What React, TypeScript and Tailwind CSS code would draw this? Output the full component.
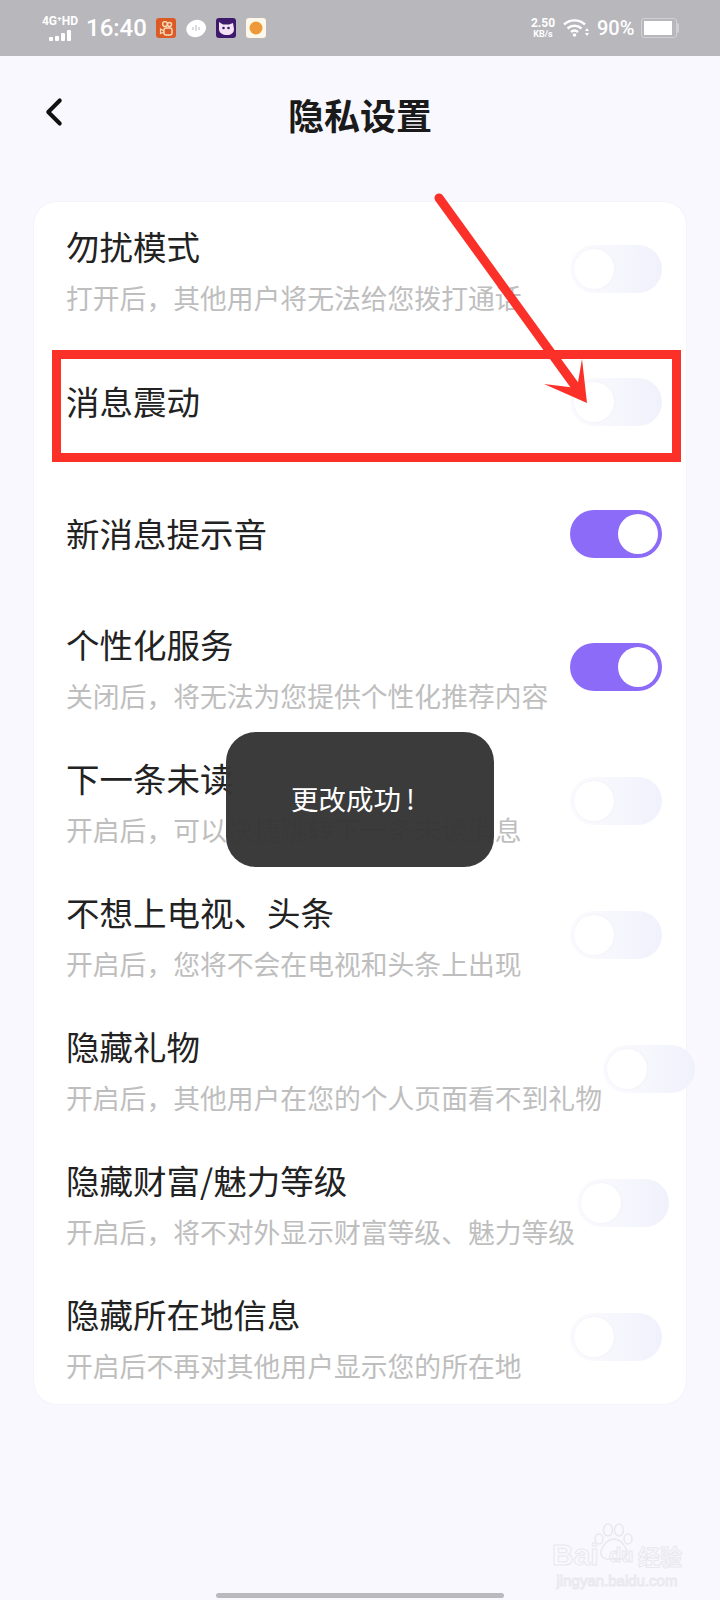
import React from 'react';
import { ChevronLeft } from 'lucide-react';

interface SettingRow {
    title: string;
    hint?: string;
    on?: boolean;
    // some switches sit off the regular right edge
    switchClass?: string;
}

const rows: SettingRow[] = [
    { title: '勿扰模式', hint: '打开后，其他用户将无法给您拨打通话' },
    { title: '消息震动' },
    { title: '新消息提示音', on: true },
    { title: '个性化服务', hint: '关闭后，将无法为您提供个性化推荐内容', on: true },
    { title: '下一条未读', hint: '开启后，可以快捷跳转下一条未读消息' },
    { title: '不想上电视、头条', hint: '开启后，您将不会在电视和头条上出现' },
    { title: '隐藏礼物', hint: '开启后，其他用户在您的个人页面看不到礼物', switchClass: 'mr-[-9px]' },
    { title: '隐藏财富/魅力等级', hint: '开启后，将不对外显示财富等级、魅力等级', switchClass: 'mr-[17px]' },
    { title: '隐藏所在地信息', hint: '开启后不再对其他用户显示您的所在地' },
];

const Toggle = ({ on, className = 'mr-6' }: { on?: boolean; className?: string }) => (
    <div
        className={`relative h-[48px] w-[92px] shrink-0 rounded-full ${className} ${
            on ? 'bg-[#8b6bf8]' : 'bg-gradient-to-r from-[#fbfbfe] to-[#f1f1fc]'
        }`}
    >
        <div
            className={`absolute top-[4px] h-[40px] w-[40px] rounded-full bg-white ${
                on ? 'right-[4px]' : 'left-[4px] shadow-[0_0_3px_#eeeef6]'
            }`}
        />
    </div>
);

const StatusBar = () => (
    <div className="flex h-[56px] items-center justify-between bg-[#b8b7bc] pl-[42px] pr-[41px] font-['Roboto',sans-serif] text-white">
        <div className="flex items-center">
            <div className="flex w-[36px] flex-col items-center">
                <span className="text-[12px] font-bold leading-[13px]">4G⁺HD</span>
                <div className="mt-[2px] flex items-end gap-[2px]">
                    <span className="h-[4px] w-[4px] rounded-[1px] bg-white" />
                    <span className="h-[5px] w-[4px] rounded-[1px] bg-white" />
                    <span className="h-[8px] w-[4px] rounded-[1px] bg-white" />
                    <span className="h-[11px] w-[4px] rounded-[1px] bg-white" />
                </div>
            </div>
            <span className="ml-[8px] text-[24px] font-medium leading-none">16:40</span>
            <div className="ml-[9px] flex items-center gap-[10px]">
                <svg width="20" height="20" viewBox="0 0 20 20">
                    <rect width="20" height="20" rx="3" fill="#dc5a26" />
                    <circle cx="9" cy="6" r="2.4" fill="none" stroke="#f7dcb8" strokeWidth="1.4" />
                    <circle cx="13.5" cy="6.5" r="2" fill="none" stroke="#f7dcb8" strokeWidth="1.4" />
                    <rect x="8" y="10" width="8" height="7" rx="2" fill="none" stroke="#f7dcb8" strokeWidth="1.4" />
                    <path d="M8 13 4.5 11v4.500L8 14" fill="none" stroke="#f7dcb8" strokeWidth="1.2" />
                </svg>
                <svg width="20" height="20" viewBox="0 0 20 20">
                    <ellipse cx="10" cy="10.5" rx="10" ry="8.5" fill="#fff" transform="rotate(-20 10 10)" />
                    <path d="M7 9v3M10 7v6M13 9v3" stroke="#b8b7bc" strokeWidth="1" />
                </svg>
                <svg width="20" height="20" viewBox="0 0 20 20">
                    <rect width="20" height="20" rx="3" fill="#3d1a6e" />
                    <path d="M3 4l4 2.500h6L17 5l1 6c0 4-3 6-7 6-4 0-8-2-8-6z" fill="#f4e3f2" />
                    <circle cx="7.500" cy="10" r="1.300" fill="#3d1a6e" />
                    <circle cx="12.500" cy="10" r="1.300" fill="#3d1a6e" />
                </svg>
                <svg width="20" height="20" viewBox="0 0 20 20">
                    <rect width="20" height="20" rx="3" fill="#fbf7ea" />
                    <circle cx="10" cy="10" r="6.500" fill="#ee9a3c" />
                </svg>
            </div>
        </div>
        <div className="flex items-center">
            <div className="flex w-[24px] flex-col items-center font-bold">
                <span className="text-[12px] leading-[12px]">2.50</span>
                <span className="text-[9px] leading-[10px]">KB/s</span>
            </div>
            <svg className="ml-[8px]" width="26" height="20" viewBox="0 0 26 20">
                <path d="M1 6.500C7 1 16 1 22 6.500" fill="none" stroke="#fff" strokeWidth="2.400" />
                <path d="M4.500 10.500c4.200-3.600 9.800-3.600 14 0" fill="none" stroke="#fff" strokeWidth="2.400" />
                <path d="M8 14c2.200-1.800 4.800-1.800 7 0" fill="none" stroke="#fff" strokeWidth="2.400" />
                <circle cx="11.500" cy="17" r="1.800" fill="#fff" />
                <path d="M24 10l-2 3h4zM24 18l-2-3h4z" fill="#fff" />
            </svg>
            <span className="ml-[8px] w-[35px] text-[20px] font-medium leading-none">90%</span>
            <div className="ml-[9px] flex h-[20px] w-[36px] items-center rounded-[3px] border border-[#d0cfd3] px-[2px]">
                <div className="h-[14px] w-[28px] bg-white" />
            </div>
            <span className="h-[10px] w-[2px] rounded-r-sm bg-[#d0cfd3]" />
        </div>
    </div>
);

// Red markup drawn on top of the screen: box around the row plus the arrow
const Annotations = () => (
    <>
        <div className="absolute left-[52px] top-[350px] h-[112px] w-[629px] border-[9px] border-[#fb3129]" />
        <svg className="absolute left-0 top-0" width="720" height="1600" viewBox="0 0 720 1600">
            <line x1="439" y1="198" x2="578" y2="390" stroke="#fb3129" strokeWidth="9" strokeLinecap="round" />
            <polygon points="587,403 544,384 577,388 582,359" fill="#fb3129" />
        </svg>
    </>
);

const Watermark = () => (
    <div className="absolute left-[552px] top-[1522px] flex w-[130px] flex-col items-center font-['Liberation_Sans',sans-serif] text-transparent [-webkit-text-stroke:1px_#e9e8ee]">
        <svg className="absolute left-[42px] top-0" width="42" height="42" viewBox="0 0 42 42">
            <g fill="none" stroke="#e9e8ee" strokeWidth="1.500">
                <ellipse cx="14" cy="8" rx="4.500" ry="6" />
                <ellipse cx="25" cy="8" rx="4.500" ry="6" />
                <ellipse cx="5" cy="17" rx="4" ry="5" />
                <ellipse cx="34" cy="17" rx="4" ry="5" />
                <path d="M20 17c6 0 11 6 13 12 1 5-3 9-8 8-3-.500-7-.500-10 0-5 1-9-3-8-8 2-6 7-12 13-12z" />
            </g>
        </svg>
        <div className="mt-[18px] flex w-full items-center justify-between text-[30px] font-bold leading-[30px]">
            <span>Bai</span>
            <span className="ml-[6px] text-[20px]">du</span>
            <span className="font-['Noto_Sans_CJK_SC',sans-serif] text-[22px]">经验</span>
        </div>
        <span className="mt-[2px] text-[15px] leading-[17px]">jingyan.baidu.com</span>
    </div>
);

export default function App() {
    return (
        <div className="relative h-[1600px] w-[720px] overflow-hidden bg-[#f9f8fe] font-['Noto_Sans_CJK_SC',sans-serif]">
            <StatusBar />

            {/* Header */}
            <div className="grid h-[118px] grid-cols-[1fr_auto_1fr] items-center px-[31px]">
                <ChevronLeft className="mb-[6px] h-[46px] w-[46px] text-[#111]" strokeWidth={2.1} />
                <h1 className="mb-[3px] text-[36px] font-bold leading-none text-[#1a1a1a]">隐私设置</h1>
            </div>

            {/* Settings card */}
            <div className="mx-[33px] mt-[27px] rounded-[24px] border border-[#f5f4fa] bg-white">
                {rows.map((row) => (
                    <div
                        key={row.title}
                        className={`flex items-center justify-between pl-[32px] ${row.hint ? 'h-[134px]' : 'h-[132px]'}`}
                    >
                        <div className={`shrink-0 whitespace-nowrap ${row.hint ? 'pt-1' : 'pb-[2px]'}`}>
                            <div className="text-[33.500px] leading-[40px] text-[#222]">{row.title}</div>
                            {row.hint && (
                                <div className="mt-[14px] text-[26.800px] leading-[36px] text-[#bebebe]">{row.hint}</div>
                            )}
                        </div>
                        <Toggle on={row.on} className={row.switchClass ?? 'mr-6'} />
                    </div>
                ))}
            </div>

            {/* Toast */}
            <div className="absolute left-[226px] top-[732px] flex h-[135px] w-[268px] items-center justify-center rounded-[30px] bg-[#353535]/[.97] pb-[1px] pr-[14px] text-[27.500px] leading-none text-white">
                更改成功<span className="ml-[5px]">!</span>
            </div>

            <Annotations />
            <Watermark />

            {/* Home indicator */}
            <div className="absolute bottom-[2px] left-[216px] h-[5px] w-[288px] rounded-full bg-[#bab9be]" />
        </div>
    );
}
